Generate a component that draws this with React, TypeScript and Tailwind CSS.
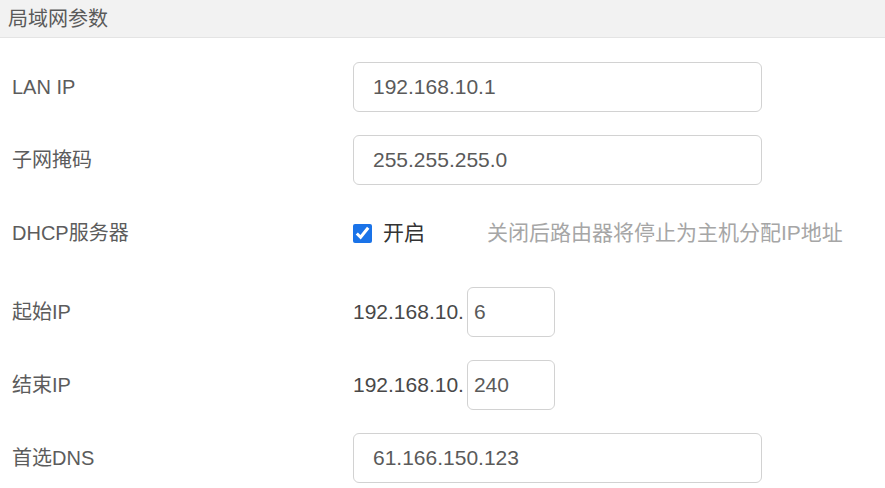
import React from "react";

const font = { fontFamily: '"Liberation Sans", "Noto Sans CJK SC", sans-serif' };

const Row = ({ label, children, className = "" }: { label: string; children: React.ReactNode; className?: string }) => (
  <div className={`flex items-center h-[50px] ${className}`}>
    <div className="w-[353px] shrink-0 pl-3 text-[20px] text-[#5c5c5c]">{label}</div>
    <div className="flex items-center">{children}</div>
  </div>
);

const TextBox = ({ value, small = false }: { value: string; small?: boolean }) => (
  <input
    type="text"
    defaultValue={value}
    className={`h-[50px] rounded-[6px] border border-[#d2d2d2] bg-white text-[21px] text-[#5a5a5a] outline-none ${
      small ? "w-[88px] ml-[3px] pl-[6px]" : "w-[409px] pl-[19px]"
    }`}
    style={font}
  />
);

export default function App() {
  return (
    <div className="w-[885px] h-[488px] bg-white overflow-hidden" style={font}>
      {/* header */}
      <div className="h-[38px] bg-[#f2f2f2] border-b border-[#e4e4e4] flex items-center pl-2 text-[20px] text-[#5a5a5a]">
        局域网参数
      </div>

      <div className="pt-[24px]">
        <Row label="LAN IP">
          <TextBox value="192.168.10.1" />
        </Row>

        <Row label="子网掩码" className="mt-[23px]">
          <TextBox value="255.255.255.0" />
        </Row>

        <Row label="DHCP服务器" className="mt-[23px]">
          <label className="flex items-center">
            <input type="checkbox" defaultChecked className="w-[19px] h-[19px] accent-[#1a73e8] m-0" />
            <span className="ml-[11px] text-[21px] text-[#333]">开启</span>
          </label>
          <span className="ml-[62px] text-[21px] text-[#a6a6a6]">关闭后路由器将停止为主机分配IP地址</span>
        </Row>

        <Row label="起始IP" className="mt-[29px]">
          <span className="text-[21px] text-[#484848]">192.168.10.</span>
          <TextBox value="6" small />
        </Row>

        <Row label="结束IP" className="mt-[23px]">
          <span className="text-[21px] text-[#484848]">192.168.10.</span>
          <TextBox value="240" small />
        </Row>

        <Row label="首选DNS" className="mt-[23px]">
          <TextBox value="61.166.150.123" />
        </Row>
      </div>
    </div>
  );
}
